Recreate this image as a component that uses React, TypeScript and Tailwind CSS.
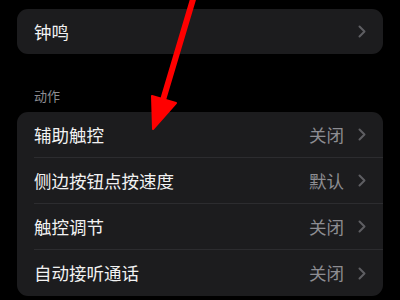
import React from 'react';

const rows = [
  { label: '辅助触控', value: '关闭' },
  { label: '侧边按钮点按速度', value: '默认' },
  { label: '触控调节', value: '关闭' },
  { label: '自动接听通话', value: '关闭' },
];

function Chevron() {
  return (
    <svg width="8" height="13" viewBox="0 0 8 13" className="shrink-0">
      <path d="M1.5 1.5 L6.5 6.5 L1.5 11.5" fill="none" stroke="#5e5e62" strokeWidth="2" strokeLinecap="round" strokeLinejoin="round" />
    </svg>
  );
}

export default function App() {
  return (
    <div
      className="relative w-[400px] h-[300px] overflow-hidden bg-black text-[#f2f2f2]"
      style={{ fontFamily: '"Noto Sans CJK SC", "Noto Sans", sans-serif' }}
    >
      <div className="px-[17px] pt-[9px]">
        {/* Top card */}
        <div className="h-[45px] rounded-[11px] bg-[#1c1c1e] flex items-center pl-[17px] pr-[17px]">
          <span className="flex-1 text-[17.5px] leading-none">钟鸣</span>
          <Chevron />
        </div>

        {/* Section header */}
        <div className="mt-[35px] pl-[17px] text-[13px] leading-none text-[#8d8d92]">动作</div>

        {/* Action card */}
        <div className="mt-[10px] rounded-[11px] bg-[#1c1c1e] overflow-hidden">
          {rows.map((r, i) => (
            <div key={r.label} className="pl-[17px]">
              <div
                className={
                  'h-[46px] flex items-center pr-[17px] ' +
                  (i < rows.length - 1 ? 'border-b border-[#2c2c2f]' : '')
                }
              >
                <span className="flex-1 text-[17.5px] leading-none">{r.label}</span>
                <span className="text-[17.5px] leading-none text-[#8d8d92] mr-[14px]">{r.value}</span>
                <Chevron />
              </div>
            </div>
          ))}
        </div>
      </div>

      {/* Red annotation arrow */}
      <svg className="absolute left-0 top-0 pointer-events-none" width="400" height="300" viewBox="0 0 400 300">
        <line x1="194" y1="-4" x2="163" y2="100" stroke="#ff0000" strokeWidth="6" strokeLinecap="round" />
        <polygon points="153,129 152,96 176,103" fill="#ff0000" stroke="#ff0000" strokeWidth="2" strokeLinejoin="round" />
      </svg>
    </div>
  );
}
